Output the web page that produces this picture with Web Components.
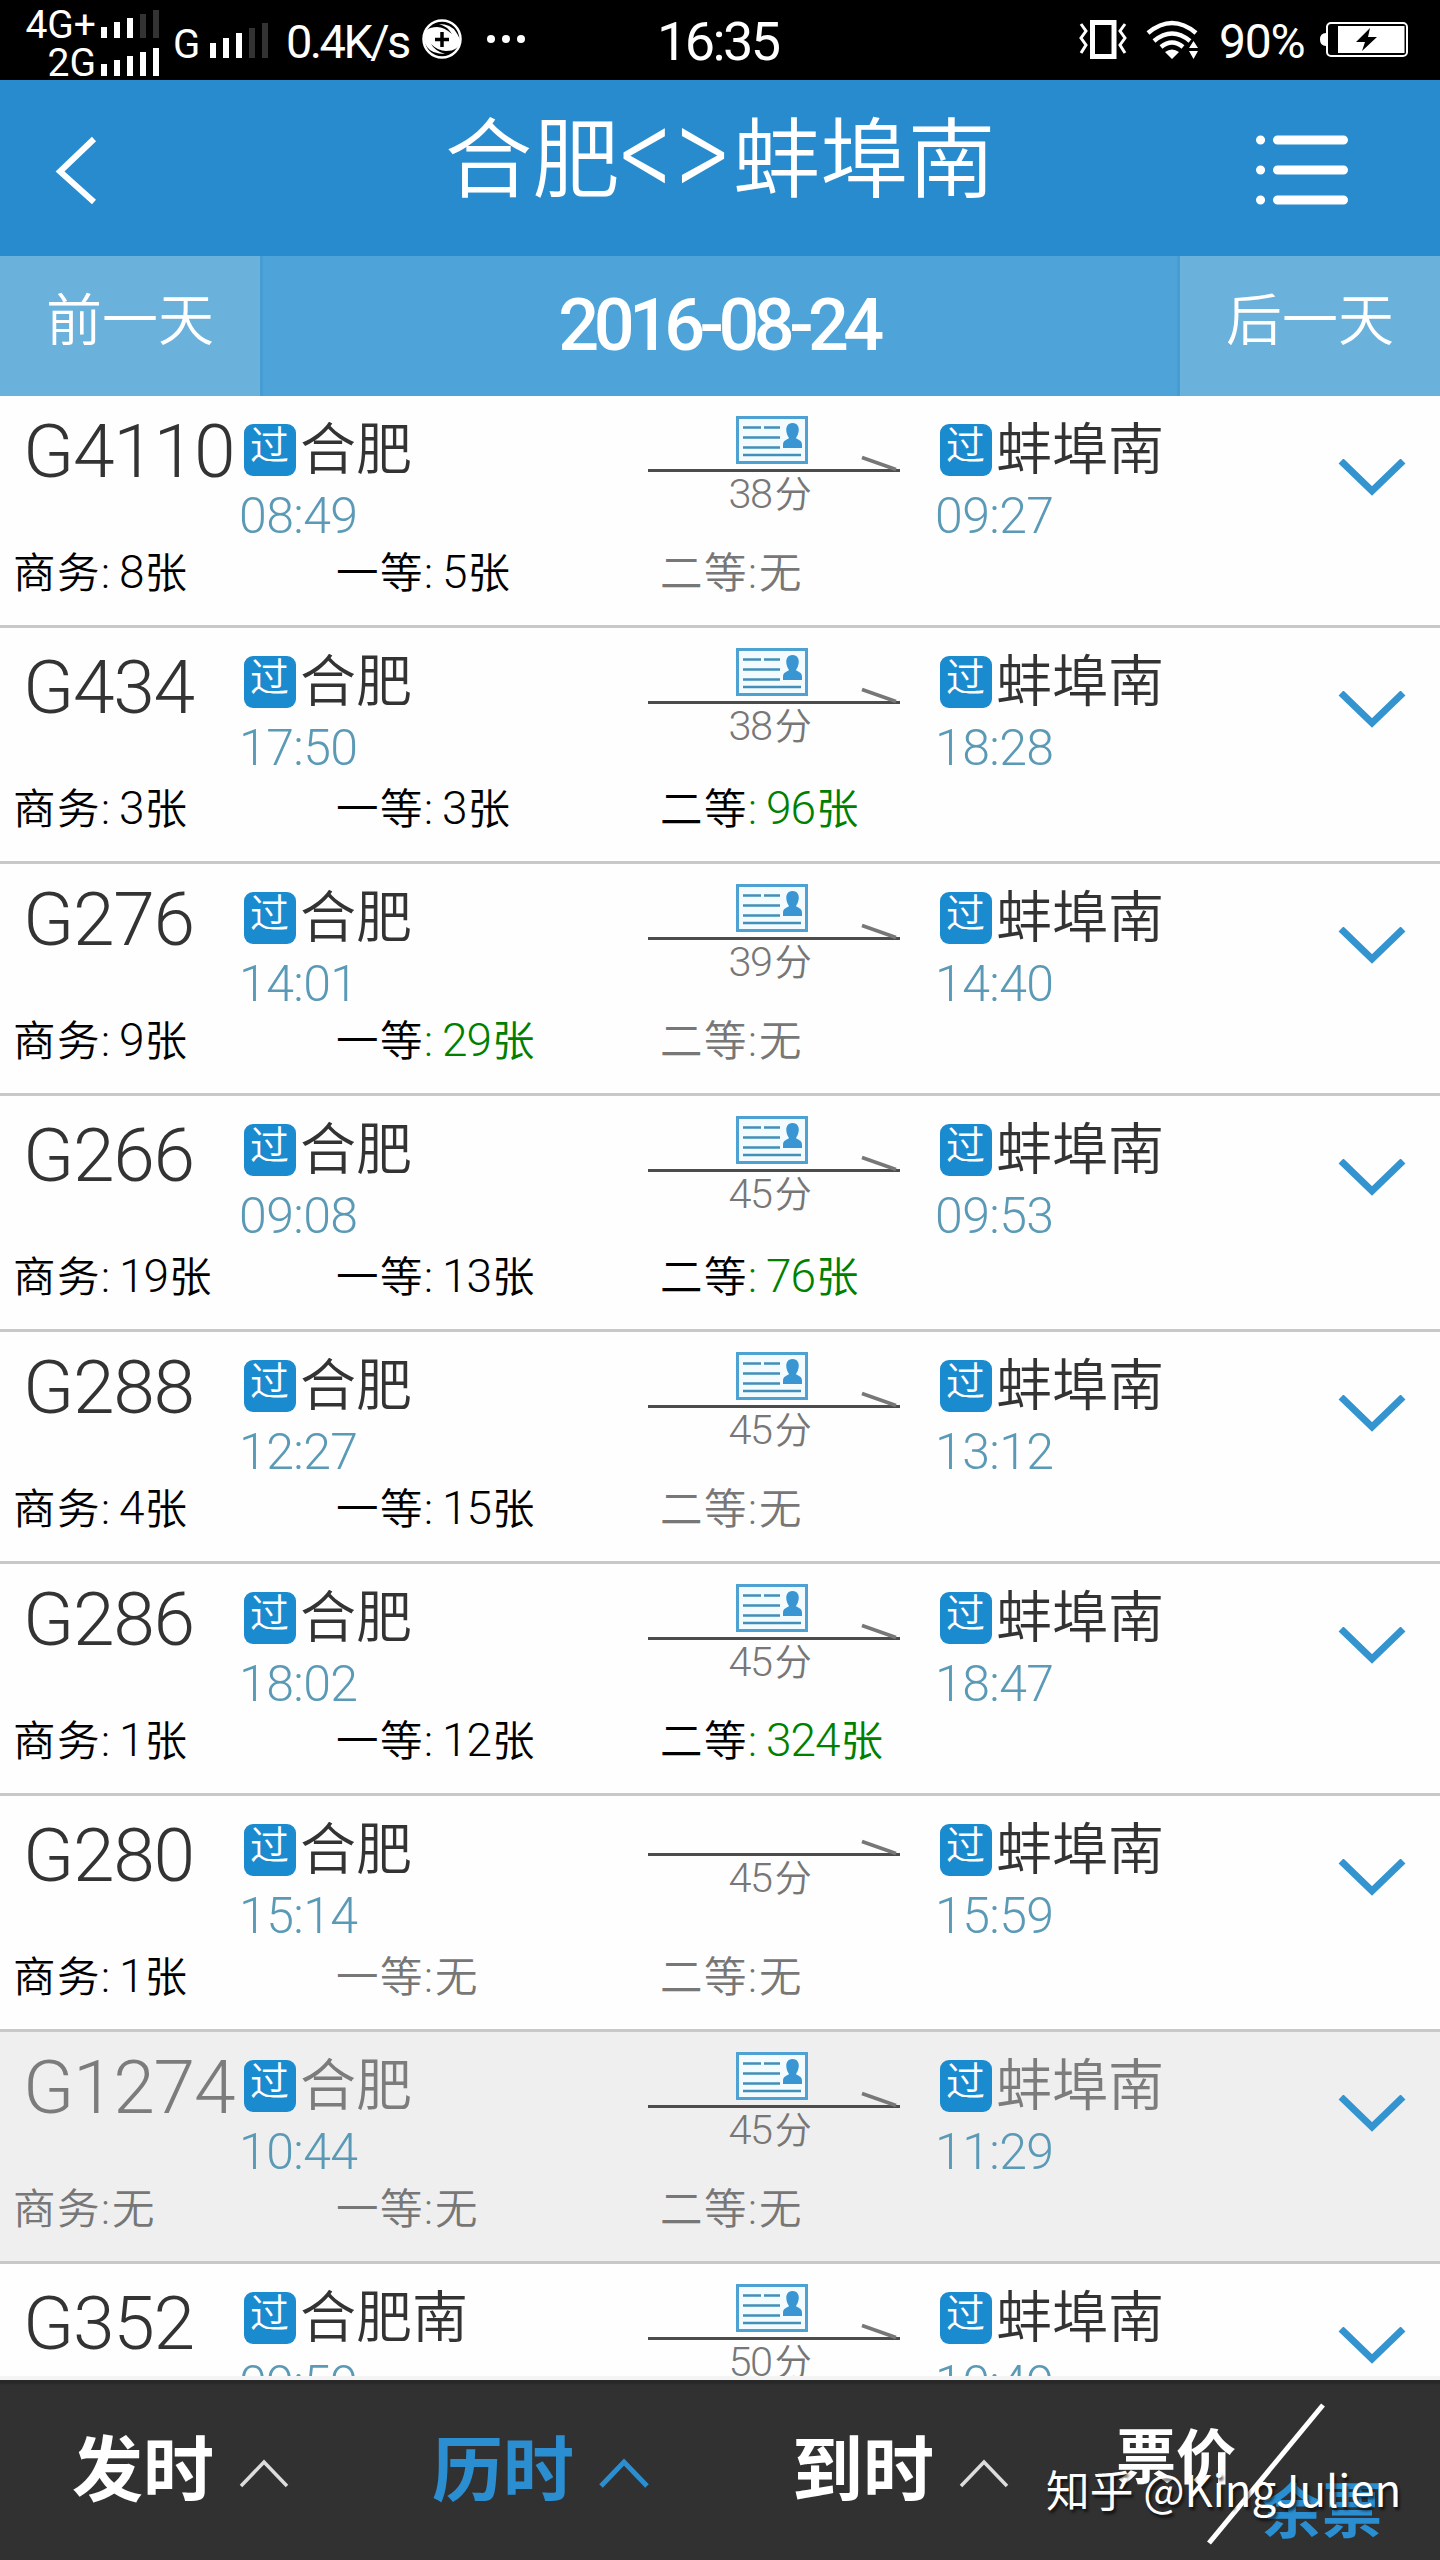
<!DOCTYPE html>
<html lang="zh-CN">
<head>
<meta charset="utf-8">
<title>合肥&lt;&gt;蚌埠南</title>
<style>
html,body{margin:0;padding:0;background:#fff}
body{width:1440px;height:2560px;overflow:hidden;font-family:Roboto,"Noto Sans CJK SC",sans-serif;line-height:1}
</style>
</head>
<body>
<train-app></train-app>
<script>
const define = (name, html, setup) => {
  const tpl = document.createElement('template');
  tpl.innerHTML = html;
  customElements.define(name, class extends HTMLElement {
    constructor() {
      super();
      this.attachShadow({ mode: 'open' });
    }
    connectedCallback() {
      if (this.shadowRoot.childNodes.length) return;
      this.shadowRoot.append(tpl.content.cloneNode(true));
      if (setup) setup(this, this.shadowRoot);
    }
  });
};

define('signal-bars', `
<style>
:host{display:flex;align-items:flex-end;gap:7px;height:var(--h,35px)}
i{width:6px;background:#fff}
i.off{background:#333}
</style>`, (host, root) => {
  const on = +host.getAttribute('on');
  host.getAttribute('heights').split(',').forEach((h, n) => {
    const bar = document.createElement('i');
    bar.style.height = h + 'px';
    if (n >= on) bar.className = 'off';
    root.append(bar);
  });
});

define('status-bar', `
<style>
:host{display:flex;align-items:flex-start;height:80px;background:#000;color:#fff;position:relative}
.sims{width:159px;display:flex;flex-direction:column;align-items:flex-end;padding-top:7px;font-size:39px}
.sims div{display:flex;align-items:flex-start;height:38px}
.sims span{margin:-1px 5px 0 0}
.sims signal-bars{margin-top:-4px}
.g{font-size:40px;margin:25px 0 0 14px;width:37px}
.rate{font-size:47px;margin:18px 0 0 18px;width:133px;letter-spacing:-2.6px}
svg{display:block;overflow:visible}
.time{font-size:54px;margin:15px 0 0 128px;width:421px;letter-spacing:-2.6px}
.pct{font-size:48px;margin:18px 0 0 20px;width:101px;letter-spacing:-1.2px}
</style>
<div class="sims">
 <div><span>4G+</span><signal-bars on="3" heights="11,16,20,24,28"></signal-bars></div>
 <div><span>2G</span><signal-bars on="5" heights="12,16,20,24,28"></signal-bars></div>
</div>
<span class="g">G</span>
<signal-bars style="--h:58px" on="3" heights="15,20,25,30,35"></signal-bars>
<span class="rate">0.4K/s</span>
<svg width="110" height="80" viewBox="419 0 110 80">
 <circle cx="442" cy="39" r="18.500" fill="none" stroke="#fff" stroke-width="2.500"/>
 <path d="M424 38Q424 27 437 27Q444 27 452 34Q447 26 439 24Q451 24 456 32Q460 38 460 41Q459 51 446 51Q438 51 431 44Q435 51 445 54Q432 54 427 47Q424 43 424 38Z" fill="#fff"/>
 <path d="M435 39.500h14M442 32v15" stroke="#000" stroke-width="3.500"/>
 <g fill="#fff"><circle cx="491" cy="39" r="4"/><circle cx="506" cy="39" r="4"/><circle cx="521" cy="39" r="4"/></g>
</svg>
<span class="time">16:35</span>
<svg width="121" height="80" viewBox="1079 0 121 80">
 <rect x="1093.500" y="22.500" width="21.500" height="34" fill="none" stroke="#fff" stroke-width="5"/>
 <path d="M1082 24l5 7-5 7 5 7-5 8M1126 24l-5 7 5 7-5 7 5 8" fill="none" stroke="#fff" stroke-width="3"/>
 <g fill="none" stroke="#fff" stroke-width="4.500"><path d="M1149 33Q1173 13 1197 33"/><path d="M1155 41Q1173 26 1191 41"/><path d="M1162 47Q1173 38 1184 47"/></g>
 <path d="M1166 52Q1173 47 1180 52L1173 59ZM1190 48l4.500-7 4.500 7ZM1190 51l4.500 8 4.500-8Z" fill="#fff"/>
</svg>
<span class="pct">90%</span>
<svg width="90" height="80" viewBox="1320 0 90 80">
 <path d="M1326 33q-6 0-6 6.500t6 6.500Z" fill="#fff"/>
 <rect x="1327" y="23" width="80" height="33" rx="4" fill="none" stroke="#fff" stroke-width="2"/>
 <rect x="1338" y="26" width="66.500" height="27" fill="#fff"/>
 <path d="M1370 28l-14 14h9l-3 9 15-14h-9Z" fill="#000"/>
</svg>`);

define('route-header', `
<style>
:host{display:flex;height:176px;background:#278bce;color:#fff}
svg{display:block;flex:none}
h1{flex:1;margin:0;padding-top:38px;display:flex;justify-content:center;font:350 87.500px/1 Roboto,"Noto Sans CJK SC",sans-serif}
</style>
<svg width="200" height="176" viewBox="0 80 200 176"><path d="M94 139L60 171.500 94 202" fill="none" stroke="#fff" stroke-width="6"/></svg>
<h1><slot></slot></h1>
<svg width="200" height="176" viewBox="1240 80 200 176"><g stroke="#fff" stroke-width="9" stroke-linecap="round"><path d="M1260.500 140h.1M1260.500 170h.1M1260.500 200h.1M1277.500 140h66M1277.500 170h66M1277.500 200h66"/></g></svg>`);

define('date-bar', `
<style>
:host{display:grid;grid-template-columns:260px 920px 260px;height:140px;background:#6ab1dc;color:#fff;text-align:center}
.d{font-size:56px;font-weight:350;padding-top:37px}
.m{background:#4ea3d9;font-size:72px;font-weight:500;letter-spacing:-5.600px;padding:34px 3px 0 0;box-shadow:inset 3px 0 #469dd3,inset -3px 0 #469dd3}
</style>
<div class="d">前一天</div><div class="m"><slot></slot></div><div class="d">后一天</div>`);

define('station-stop', `
<style>
:host{display:block}
.s{display:flex;font-size:56px;font-weight:350;height:56px}
.p{width:52px;height:52px;box-sizing:border-box;border-radius:9px;background:#1b8bcf;color:#fff;font-size:39px;padding:3px 0 0 6px;margin:2px 4px 0 0}
.t{font-size:50px;font-weight:300;color:#5b9ab6;letter-spacing:-.6px;margin:13px 0 0 -5px}
</style>
<div class="s"><span class="p">过</span><slot></slot></div><div class="t"></div>`, (host, root) => {
  root.querySelector('.t').textContent = host.getAttribute('time');
});

define('trip-arrow', `
<style>
:host{display:block;width:252px;text-align:center;color:#777;font-size:37px;font-weight:350}
svg{display:block}
:host([nocard]) .card{display:none}
:host([nocard]) svg{margin-top:-16px}
.t{padding:1px 8px 0 0}
.t b{font-weight:300;font-size:41.500px;line-height:0;letter-spacing:-1.400px;margin-right:3px}
</style>
<svg width="252" height="80" viewBox="648 396 252 80">
 <g class="card">
  <rect x="737.500" y="417.500" width="69" height="45" fill="#f3fbff" stroke="#4ea2d3" stroke-width="3"/>
  <path d="M743 427.500h18M764 427.500h16M743 437.500h37M743 447.500h37M743 455h58" stroke="#4290b8" stroke-width="2.700"/>
  <path d="M792.500 423c5 0 7 4 6 9-.6 3-1.500 4-2.500 6 2 2 6 2 6 7v3h-19v-3c0-5 4-5 6-7-1-2-2-3-2.500-6-1-5 1-9 6-9Z" fill="#3996d2"/>
 </g>
 <path d="M648 470.500h252" stroke="#4c4c4c" stroke-width="3"/>
 <path d="M862 457.500l34 12" stroke="#777" stroke-width="3.500"/>
</svg>
<div class="t"><b></b>分</div>`, (host, root) => {
  root.querySelector('b').textContent = host.getAttribute('minutes');
});

define('seat-count', `
<style>
:host{display:block;font-size:42.500px;font-weight:350;color:#000;white-space:nowrap}
.l{letter-spacing:1.500px}
.c{letter-spacing:2px}
b{font-weight:300;font-size:46px;line-height:0;letter-spacing:-1px;margin:0 1px 0 7px}
.plenty .v{color:#008000}
.none{color:#777}
</style>
<div><span class="l"></span><span class="v"><span class="c">:</span><b></b><span class="u"></span></span></div>`, (host, root) => {
  const n = +host.getAttribute('left');
  root.querySelector('.l').textContent = host.getAttribute('label');
  if (n) root.querySelector('b').textContent = n;
  else root.querySelector('b').remove();
  root.querySelector('.u').textContent = n ? '张' : '无';
  root.querySelector('div').className = n > 20 ? 'plenty' : n ? '' : 'none';
});

define('train-row', `
<style>
:host{display:block;box-sizing:border-box;height:232px;border-bottom:3px solid #c8c8c8;background:#fefefe;color:#333;--drop:0px;flex:none}
:host([tall]){height:236px}
:host([low]){--drop:4px}
:host([dim]){background:#efefef;color:#7c7c7c}
.top{display:grid;grid-template-columns:244px 404px 252px 40px 394px 1fr;height:calc(157px + var(--drop))}
.no{font-size:75px;font-weight:300;letter-spacing:-1.300px;padding:calc(18px + var(--drop)) 0 0 23px;white-space:nowrap}
station-stop{padding-top:26px}
.go{display:block;margin-top:63px}
.seats{display:grid;grid-template-columns:323px 324px 1fr;padding-left:13px}
</style>
<div class="top"><div class="no"></div><station-stop class="a"></station-stop><trip-arrow></trip-arrow><i></i><station-stop class="b">蚌埠南</station-stop>
<svg class="go" width="76" height="38" viewBox="0 0 76 38"><path d="M7 2l31 30L69 2" fill="none" stroke="#3394d0" stroke-width="7"/></svg></div>
<div class="seats"></div>`);

const trains = [
  ['G4110', '合肥', '08:49', 38, '09:27', [8, 5, 0], ''],
  ['G434', '合肥', '17:50', 38, '18:28', [3, 3, 96], 'low tall'],
  ['G276', '合肥', '14:01', 39, '14:40', [9, 29, 0], ''],
  ['G266', '合肥', '09:08', 45, '09:53', [19, 13, 76], 'low tall'],
  ['G288', '合肥', '12:27', 45, '13:12', [4, 15, 0], ''],
  ['G286', '合肥', '18:02', 45, '18:47', [1, 12, 324], ''],
  ['G280', '合肥', '15:14', 45, '15:59', [1, 0, 0], 'low tall nocard'],
  ['G1274', '合肥', '10:44', 45, '11:29', [0, 0, 0], 'dim'],
  ['G352', '合肥南', '09:59', 50, '10:49', [], 'low tall']
];

define('train-list', `
<style>:host{display:flex;flex-direction:column;height:1980px;overflow:hidden;border-bottom:4px solid #f4f4f4}</style>`, (host, root) => {
  for (const [no, from, dep, min, arr, seats, flags] of trains) {
    const row = document.createElement('train-row');
    flags.split(' ').filter(Boolean).forEach(f => row.setAttribute(f, ''));
    root.append(row);
    const r = row.shadowRoot;
    const fill = (el, attrs) => {
      const fresh = document.createElement(el.localName);
      if (el.className) fresh.className = el.className;
      fresh.textContent = el.textContent;
      for (const k in attrs) fresh.setAttribute(k, attrs[k]);
      el.replaceWith(fresh);
      return fresh;
    };
    r.querySelector('.no').textContent = no;
    fill(r.querySelector('.a'), { time: dep }).textContent = from;
    fill(r.querySelector('.b'), { time: arr });
    const arrow = fill(r.querySelector('trip-arrow'), { minutes: min });
    if (row.hasAttribute('nocard')) arrow.setAttribute('nocard', '');
    seats.forEach((left, n) => {
      const seat = document.createElement('seat-count');
      seat.setAttribute('label', ['商务', '一等', '二等'][n]);
      seat.setAttribute('left', left);
      r.querySelector('.seats').append(seat);
    });
  }
});

define('sort-tab', `
<style>
:host{display:flex;box-sizing:border-box;width:360px;padding:55px 0 0 72px;color:#fff;font-size:71px;font-weight:700}
:host([active]){color:#2a8ed1}
svg{display:block;margin:21px 0 0 24px}
path{stroke:#ddd;stroke-width:3.500}
:host([active]) path{stroke:#2a8ed1;stroke-width:5}
</style>
<slot></slot><svg width="52" height="36" viewBox="0 0 52 36"><path d="M3 30L26 6 49 30" fill="none"/></svg>`);

define('sort-bar', `
<style>
:host{display:flex;position:relative;height:180px;background:linear-gradient(#282828 0,#282828 3px,#313131 5px);color:#fff}
.x{position:relative;width:360px;font-size:60px;font-weight:700}
.x span,.x svg{position:absolute}
.p{left:36px;top:49px}
.r{left:182px;top:103px;color:#2a8ed1}
.x svg{left:0;top:0}
.wm{position:absolute;left:1046px;top:87px;font:400 43.700px/1 "Noto Sans CJK SC",sans-serif;white-space:nowrap;text-shadow:2px 3px 3px rgba(0,0,0,.65)}
</style>
<sort-tab>发时</sort-tab><sort-tab active>历时</sort-tab><sort-tab>到时</sort-tab>
<div class="x"><span class="p">票价</span><span class="r">余票</span><svg width="360" height="180"><path d="M243 25L129 163" stroke="#fff" stroke-width="5"/></svg></div>
<div class="wm">知乎 @KingJulien</div>`);

define('train-app', `
<style>
:host{display:flex;flex-direction:column;width:1440px;height:2560px}
b{font-weight:300;font-size:102px;line-height:88px;letter-spacing:4px;margin:-10px 0 0 0;height:88px;transform:scaleY(1.3)}
</style>
<status-bar></status-bar>
<route-header>合肥<b>&lt;&gt;</b>蚌埠南</route-header>
<date-bar>2016-08-24</date-bar>
<train-list></train-list>
<sort-bar></sort-bar>`);
</script>
</body>
</html>
